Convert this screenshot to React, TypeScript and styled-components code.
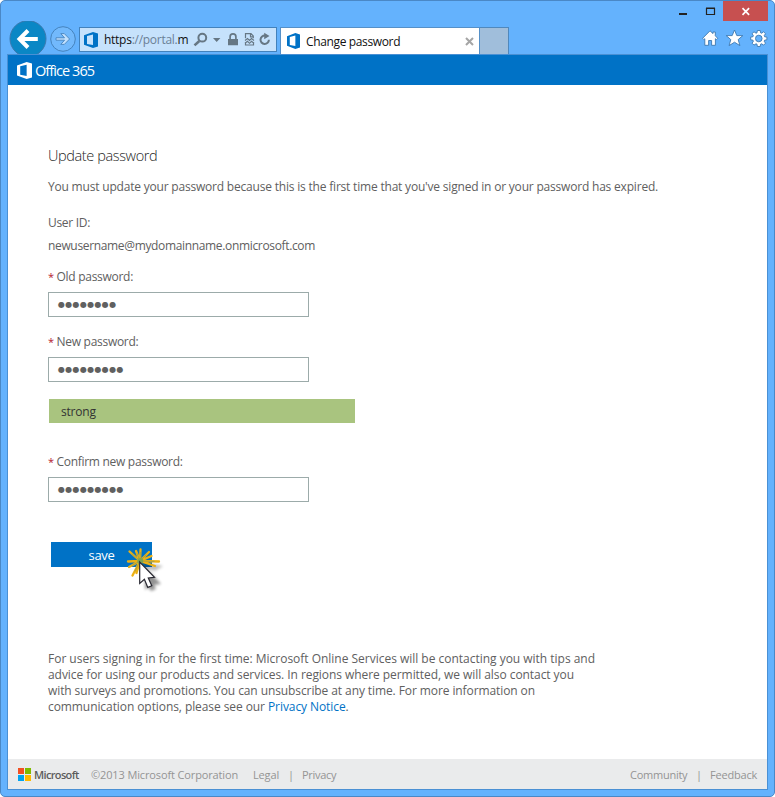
import React from 'react';
import styled, { createGlobalStyle } from 'styled-components';

const GlobalStyle = createGlobalStyle`
  *, *::before, *::after { box-sizing: border-box; }
  body { margin: 0; background: #fff; font-family: "Open Sans", "Noto Sans", sans-serif; font-size: 12px; color: #606060; }
  svg { display: block; flex: none; }
`;

const Window = styled.div`
  width: 775px;
  height: 797px;
  display: flex;
  flex-direction: column;
  padding: 0 6px 6px;
  background: #64b2fd;
  border: 1px solid #4a88c6;
  border-radius: 5px;
  overflow: hidden;
`;

const TitleBar = styled.div`
  display: flex;
  justify-content: flex-end;
  height: 20px;
  flex: none;
`;

const CaptionButton = styled.button<{ $width: number; $close?: boolean }>`
  width: ${p => p.$width}px;
  height: 20px;
  padding: 0;
  border: 0;
  background: ${p => (p.$close ? '#c75050' : 'transparent')};
`;

const Toolbar = styled.div`
  display: flex;
  align-items: flex-start;
  height: 33px;
  flex: none;
`;

const Nav = styled.div`
  display: flex;
  width: 72px;
  height: 33px;
  flex: none;
  overflow: visible;
`;

const AddressBar = styled.div`
  display: flex;
  align-items: center;
  width: 198px;
  height: 25px;
  margin-top: 6px;
  padding-left: 4px;
  border: 1px solid #4382bc;
  background: #c6e2fc;
  flex: none;
`;

const Url = styled.span`
  width: 89px;
  margin-left: 6px;
  color: #6b8096;
  letter-spacing: -0.27px;
  white-space: nowrap;
  flex: none;
`;

const UrlStrong = styled.span`
  color: #111;
`;

const Tab = styled.div`
  display: flex;
  align-items: center;
  width: 200px;
  height: 27px;
  margin: 6px 0 0 3px;
  padding: 0 5px 0 6px;
  background: #fff;
  border: 1px solid #5590c8;
  border-bottom: 0;
  flex: none;
`;

const TabTitle = styled.span`
  flex: 1;
  margin-left: 6px;
  color: #111;
  letter-spacing: -0.36px;
`;

const NewTab = styled.div`
  width: 29px;
  height: 27px;
  margin-top: 6px;
  background: #a0bedb;
  border: 1px solid #4f88bd;
  border-width: 1px 1px 0 0;
`;

const Tools = styled.div`
  display: flex;
  gap: 8px;
  margin: 9px 0 0 auto;
`;

const Page = styled.div`
  display: flex;
  flex: 1;
  flex-direction: column;
  min-height: 0;
  background: #fff;
  border: 1px solid #4a90d4;
`;

const SuiteBar = styled.header`
  display: flex;
  align-items: center;
  height: 30px;
  flex: none;
  padding-left: 9px;
  background: #0072c6;
`;

const Brand = styled.span`
  margin: 1px 0 0 3px;
  color: #fff;
  font-size: 14.5px;
  line-height: 20px;
  letter-spacing: -0.93px;
`;

const Main = styled.main`
  flex: 1;
  padding: 61px 0 0 40px;
`;

const Heading = styled.h1`
  margin: 0 0 13px;
  font-size: 14.5px;
  font-weight: 300;
  line-height: 20px;
  letter-spacing: -0.38px;
  color: #262626;
`;

const Line = styled.p<{ $gap: number; $spacing: number }>`
  margin: 0 0 ${p => p.$gap}px;
  line-height: 16px;
  letter-spacing: ${p => p.$spacing}px;
  white-space: nowrap;
`;

const Label = styled.label<{ $spacing: number }>`
  display: block;
  height: 23px;
  line-height: 16px;
  letter-spacing: ${p => p.$spacing}px;
`;

const Required = styled.span`
  display: inline-block;
  width: 8.5px;
  font-size: 11px;
  color: #b4202f;
`;

const PasswordBox = styled.div`
  width: 261px;
  height: 25px;
  padding: 0 0 0 9px;
  border: 1px solid #9cabaa;
  font-family: "DejaVu Sans", sans-serif;
  font-size: 8px;
  line-height: 24px;
  letter-spacing: 0.33px;
  color: #606060;
`;

const Field = styled.div<{ $gap: number }>`
  margin-bottom: ${p => p.$gap}px;
`;

const Strength = styled.div`
  width: 306px;
  height: 24px;
  margin: 0 0 31px 1px;
  padding-left: 12px;
  background: #a9c47f;
  color: #333;
  line-height: 25px;
  letter-spacing: -0.2px;
`;

const SaveRow = styled.div`
  position: relative;
  width: 120px;
  margin: 0 0 84px 3px;
`;

const SaveButton = styled.button`
  display: block;
  width: 101px;
  height: 25px;
  padding: 1px 0 0;
  border: 0;
  background: #0072c6;
  color: #fff;
  font: 13px/24px "Open Sans", sans-serif;
  letter-spacing: -0.35px;
`;

const Pointer = styled.svg`
  position: absolute;
  left: 73px;
  top: 3px;
`;

const Link = styled.a`
  color: #0072c6;
`;

const Footer = styled.footer`
  display: flex;
  align-items: center;
  height: 30px;
  flex: none;
  padding: 1px 10px 0;
  background: #eaebec;
`;

const FooterText = styled.span<{ $width: number; $spacing: number }>`
  width: ${p => p.$width}px;
  flex: none;
  font-size: 11px;
  line-height: 16px;
  padding-top: 1px;
  color: #949494;
  letter-spacing: ${p => p.$spacing}px;
  white-space: nowrap;
`;

const MicrosoftName = styled.span`
  width: 57px;
  margin-left: 3px;
  color: #5c5c5c;
  font-size: 11px;
  line-height: 16px;
  font-weight: 600;
  letter-spacing: -0.65px;
`;

const Spacer = styled.span`
  flex: 1;
`;

const OfficeMark = ({ width, height, color }: { width: number; height: number; color: string }) => (
  <svg width={width} height={height} viewBox="0 0 14 17" preserveAspectRatio="none">
    <path fill={color} fillRule="evenodd" d="M0 3.5 9 0l5 1.5v14L9 17 0 13.6ZM3 4.2v8.6l6 1.1V2.7Z" />
  </svg>
);

const NavButtons = () => (
  <svg width="72" height="33" viewBox="7 21 72 33">
    <circle cx="28" cy="38.7" r="18" fill="#0a87c5" stroke="#3a78ad" />
    <path d="M37.8 39H20M28 30.5 19.5 39l8.5 8.5" fill="none" stroke="#fff" strokeWidth="4" />
    <circle cx="63" cy="39" r="12.3" fill="#72b9fc" stroke="#4583bd" />
    <path d="M56 37.8h8.5l-3.7-4.2h3.5l5.3 5.4-5.3 5.4h-3.5l3.7-4.2H56Z" fill="#c2e0fd" stroke="#4583bd" strokeWidth=".9" />
  </svg>
);

const AddressIcons = () => (
  <svg width="82" height="23" viewBox="193 28 82 23">
    <g fill="none" stroke="#667784">
      <circle cx="202.3" cy="37.7" r="3.9" strokeWidth="2" />
      <path d="m199.3 41-4.8 4.4" strokeWidth="2.6" />
      <path d="M230.1 39.5v-2.8a2.9 2.9 0 0 1 5.8 0v2.8" strokeWidth="1.7" />
      <path d="M245.5 38.3v-4.6h5.5l2.3 2.3v2.3M245.5 42.5v2.5h8v-2.5M250.5 33.8v3h3" strokeWidth="1.2" />
      <path d="m245 40.5 2.5-2 2 2 2-2 2.5 2M245 43.3l2.5-2 2 2 2-2 2.5 2" strokeWidth="1.1" />
      <path d="M268.9 39.8a4.2 4.2 0 1 1-3.6-4.2" strokeWidth="2" />
    </g>
    <path d="M213 38h7.4l-3.7 4ZM228 39h10v6.2h-10ZM264.2 32.8l5.3 3.2-5.3 3.2Z" fill="#667784" />
  </svg>
);

const ToolIcons = () => (
  <Tools>
    <svg width="66" height="18" viewBox="702 30 66 18">
      <g fill="#fff" stroke="#3d78af" strokeWidth=".9" strokeLinejoin="round">
        <path d="m710 30.8 3 2.8V32h2.3v3.8l2.4 2.5-1.3 1.2-1-.8v6.6h-3.8v-4.8h-3v4.8h-3.8v-6.6l-1 .8-1.2-1.2Z" />
        <path d="m734.5 30 2.3 5.6h6l-4.6 4 1.7 6-5.4-3.4-5.4 3.4 1.7-6-4.6-4h6Z" />
        <path fillRule="evenodd" d="m757.4 30.5h2.8l.4 2.3 1 .4 2-1.4 1.9 1.9-1.3 2 .4 1 2.3.4v2.7l-2.3.4-.4 1 1.3 2-1.9 1.9-2-1.3-1 .4-.4 2.3h-2.8l-.4-2.3-1-.4-2 1.3-1.9-1.9 1.3-2-.4-1-2.3-.4v-2.7l2.3-.4.4-1-1.3-2 1.9-1.9 2 1.4 1-.4ZM758.8 35.2a3.3 3.3 0 1 0 0 6.6 3.3 3.3 0 0 0 0-6.6Z" />
      </g>
    </svg>
  </Tools>
);

const ClickPointer = () => (
  <Pointer width="46" height="50" viewBox="124 545 46 50">
    <defs>
      <filter id="shade" x="-50%" y="-50%" width="200%" height="200%">
        <feGaussianBlur stdDeviation="1.8" />
      </filter>
    </defs>
    <path d="m145 567 16 17-7 1 2 4-5 2-3-4-3 3Z" fill="#000" opacity=".42" filter="url(#shade)" />
    <path d="m143 562 20 4-8 5-12-3Z" fill="#000" opacity=".25" filter="url(#shade)" />
    <g strokeLinecap="round" fill="none">
      <path d="m140 561-10.5-9.5M140 561l-4-10M140 561l.5-11.5M140 561l9-9M140 561l11.5-5M140 561l19 .5M140 561l15 5M140 561l-12 .5M140 561l-11 6M140 561l-7.500 14.500M140 561l-3.500 12" stroke="#edb113" strokeWidth="2.3" />
      <path d="m140 561-8-7.200M140 561l-3-7.500M140 561l.3-8.500M140 561l6-6M140 561l14 .4M140 561l-8 4.500M140 561l-5 10" stroke="#8e9c55" strokeWidth=".8" />
    </g>
    <circle cx="140.300" cy="561" r="3" fill="#7fa352" />
    <path d="M139.7 562v21.500l4.700-4.300 3.400 8.200 4-1.700-3.500-7.800 6.200-.600Z" fill="#fff" stroke="#292932" strokeWidth="1.200" />
  </Pointer>
);

export default function App() {
  return (
    <>
      <GlobalStyle />
      <Window>
        <TitleBar>
          <CaptionButton $width={27} aria-label="Minimize">
            <svg width="27" height="20"><path d="M10 13h8" stroke="#222" strokeWidth="2" /></svg>
          </CaptionButton>
          <CaptionButton $width={27} aria-label="Maximize">
            <svg width="27" height="20"><path d="M10.500 7.500h8v6h-8ZM10 7h9" fill="none" stroke="#222" strokeWidth="1.200" /></svg>
          </CaptionButton>
          <CaptionButton $width={45} $close aria-label="Close">
            <svg width="45" height="20"><path d="m19.500 7.200 6.600 6.600m0-6.600-6.600 6.600" stroke="#fff" strokeWidth="1.700" /></svg>
          </CaptionButton>
        </TitleBar>
        <Toolbar>
          <Nav><NavButtons /></Nav>
          <AddressBar>
            <OfficeMark width={14} height={16} color="#0072c6" />
            <Url><UrlStrong>https</UrlStrong>://portal.<UrlStrong>m</UrlStrong></Url>
            <AddressIcons />
          </AddressBar>
          <Tab>
            <OfficeMark width={13} height={16} color="#0072c6" />
            <TabTitle>Change password</TabTitle>
            <svg width="9" height="9"><path d="m1 1 7 7m0-7L1 8" stroke="#a5a5a5" strokeWidth="2" /></svg>
          </Tab>
          <NewTab />
          <ToolIcons />
        </Toolbar>
        <Page>
          <SuiteBar>
            <OfficeMark width={15} height={17} color="#fff" />
            <Brand>Office 365</Brand>
          </SuiteBar>
          <Main>
            <Heading>Update password</Heading>
            <Line $gap={20} $spacing={-0.197}>
              You must update your password because this is the first time that you've signed in or your password has expired.
            </Line>
            <Line $gap={7} $spacing={-0.3}>User ID:</Line>
            <Line $gap={15} $spacing={-0.342}>newusername@mydomainname.onmicrosoft.com</Line>
            <Field $gap={17}>
              <Label $spacing={-0.28}><Required>*</Required>Old password:</Label>
              <PasswordBox>●●●●●●●●</PasswordBox>
            </Field>
            <Field $gap={17}>
              <Label $spacing={-0.28}><Required>*</Required>New password:</Label>
              <PasswordBox>●●●●●●●●●</PasswordBox>
            </Field>
            <Strength>strong</Strength>
            <Field $gap={40}>
              <Label $spacing={-0.29}><Required>*</Required>Confirm new password:</Label>
              <PasswordBox>●●●●●●●●●</PasswordBox>
            </Field>
            <SaveRow>
              <SaveButton>save</SaveButton>
              <ClickPointer />
            </SaveRow>
            <Line $gap={0} $spacing={-0.016}>For users signing in for the first time: Microsoft Online Services will be contacting you with tips and</Line>
            <Line $gap={0} $spacing={-0.062}>advice for using our products and services. In regions where permitted, we will also contact you</Line>
            <Line $gap={0} $spacing={-0.093}>with surveys and promotions. You can unsubscribe at any time. For more information on</Line>
            <Line $gap={0} $spacing={-0.08}>communication options, please see our <Link>Privacy Notice</Link>.</Line>
          </Main>
          <Footer>
            <svg width="13" height="13">
              <path fill="#f25022" d="M0 0h6v6H0z" />
              <path fill="#7fba00" d="M7 0h6v6H7z" />
              <path fill="#00a4ef" d="M0 7h6v6H0z" />
              <path fill="#ffb900" d="M7 7h6v6H7z" />
            </svg>
            <MicrosoftName>Microsoft</MicrosoftName>
            <FooterText $width={162} $spacing={-0.13}>©2013 Microsoft Corporation</FooterText>
            <FooterText $width={35} $spacing={-0.15}>Legal</FooterText>
            <FooterText $width={14} $spacing={0}>|</FooterText>
            <FooterText $width={40} $spacing={-0.3}>Privacy</FooterText>
            <Spacer />
            <FooterText $width={66} $spacing={-0.25}>Community</FooterText>
            <FooterText $width={14} $spacing={0}>|</FooterText>
            <FooterText $width={47} $spacing={-0.2}>Feedback</FooterText>
          </Footer>
        </Page>
      </Window>
    </>
  );
}
